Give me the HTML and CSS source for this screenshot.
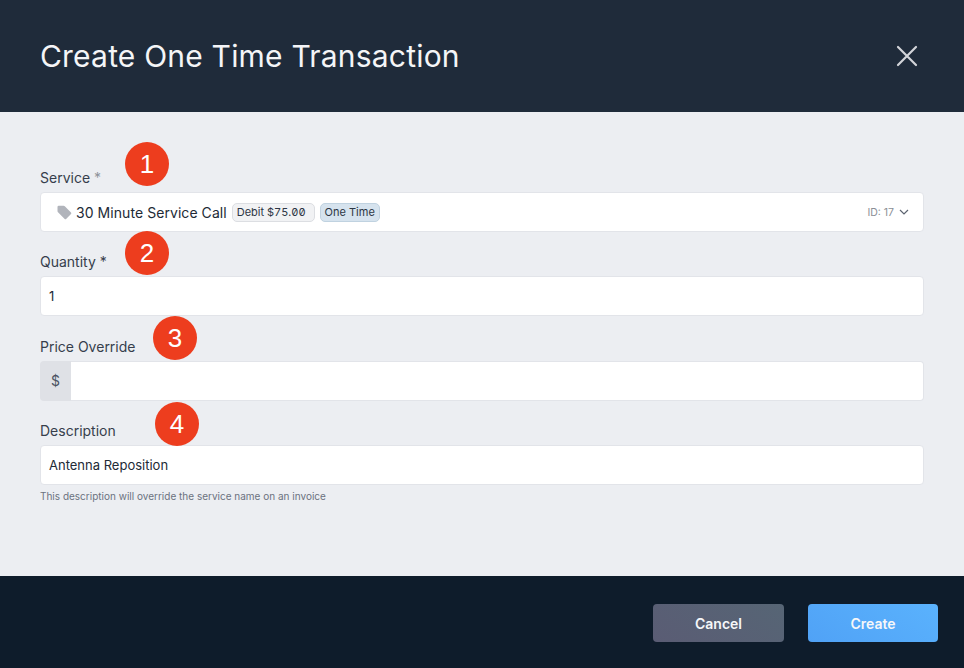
FILE: index.html
```html
<!DOCTYPE html>
<html lang="en">
<head>
  <meta charset="UTF-8">
  <meta name="viewport" content="width=device-width, initial-scale=1.0">
  <title>Create One Time Transaction</title>
  <link rel="stylesheet" href="styles.css">
</head>
<body>
  <div class="modal">
    <header class="modal-header">
      <h1>Create One Time Transaction</h1>
      <button class="close-btn" aria-label="Close">
        <svg width="24" height="24" viewBox="0 0 24 24" fill="none" stroke="currentColor" stroke-width="2.2" stroke-linecap="round">
          <path d="M3 3 L21 21 M21 3 L3 21"/>
        </svg>
      </button>
    </header>

    <main class="modal-body">
      <div class="form-group">
        <label>Service <span class="req req-muted">*</span></label>
        <div class="select-box">
          <svg class="tag-icon" width="15" height="15" viewBox="0 0 15 15">
            <path fill="#b1b4bb" d="M0.5 2 Q0.5 0.8 1.7 0.8 L6.6 0.8 Q7.3 0.8 7.8 1.3 L14 7.6 Q14.7 8.3 14 9 L9.1 13.9 Q8.4 14.6 7.7 13.9 L1 7.3 Q0.5 6.8 0.5 6.1 Z"/>
          </svg>
          <span class="select-name">30 Minute Service Call</span>
          <span class="badge badge-grey">Debit $75.00</span>
          <span class="badge badge-blue">One Time</span>
          <span class="select-id">ID: 17</span>
          <svg class="chevron" width="10" height="6" viewBox="0 0 10 6" fill="none" stroke="#5c6470" stroke-width="1.2">
            <path d="M1 1 L5 5 L9 1"/>
          </svg>
        </div>
      </div>

      <div class="form-group">
        <label>Quantity <span class="req">*</span></label>
        <div class="input">1</div>
      </div>

      <div class="form-group">
        <label>Price Override</label>
        <div class="input-group">
          <span class="addon">$</span>
          <div class="input"></div>
        </div>
      </div>

      <div class="form-group">
        <label>Description</label>
        <div class="input">Antenna Reposition</div>
        <p class="help">This description will override the service name on an invoice</p>
      </div>
    </main>

    <footer class="modal-footer">
      <button class="btn btn-cancel">Cancel</button>
      <button class="btn btn-create">Create</button>
    </footer>
  </div>

  <!-- numbered callouts drawn over the form -->
  <span class="marker marker-1">1</span>
  <span class="marker marker-2">2</span>
  <span class="marker marker-3">3</span>
  <span class="marker marker-4">4</span>
</body>
</html>
```

FILE: styles.css
```css
* {
  margin: 0;
  padding: 0;
  box-sizing: border-box;
}

body {
  font-family: Inter, "Liberation Sans", sans-serif;
  background: #eceef2;
  color: #2d3644;
  width: 964px;
  height: 668px;
  overflow: hidden;
  position: relative;
}

.modal {
  display: flex;
  flex-direction: column;
  height: 668px;
}

.modal-header {
  height: 112px;
  flex-shrink: 0;
  background: #1f2b3a;
  display: flex;
  align-items: center;
  justify-content: space-between;
  padding: 0 45px 0 40px;
}

.modal-header h1 {
  font-size: 30px;
  font-weight: 400;
  color: #f4f5f7;
  letter-spacing: 0.2px;
}

.close-btn {
  background: none;
  border: none;
  color: #d3d5d9;
  display: flex;
}

.modal-body {
  flex: 1;
  padding: 56px 40px 0;
}

.form-group {
  margin-bottom: 20.4px;
}

label {
  display: block;
  font-size: 14px;
  line-height: 20px;
  margin-bottom: 4px;
  color: #363e4c;
}

.req {
  color: #363e4c;
}

.req-muted {
  color: #8f939b;
}

.select-box,
.input {
  height: 40px;
  background: #fff;
  border: 1px solid #e2e4e9;
  border-radius: 4px;
  display: flex;
  align-items: center;
  font-size: 13px;
  color: #222a36;
}

.input {
  padding: 0 8px;
}

.select-box {
  padding: 0 14px 0 16px;
}

.tag-icon {
  margin-right: 4px;
  flex-shrink: 0;
}

.select-name {
  font-size: 14px;
  letter-spacing: 0.06px;
  margin-right: 5px;
}

.badge {
  font-size: 11px;
  line-height: 16px;
  padding: 0 4px;
  height: 19px;
  display: inline-flex;
  align-items: center;
  border-radius: 5px;
  margin-right: 5px;
  color: #2d3644;
}

.badge-grey {
  background: #f1f2f4;
  border: 1px solid #dcdee2;
  padding-right: 8px;
  font-feature-settings: "zero", "tnum";
}

.badge-blue {
  background: #d6e3ee;
  border: 1px solid #c0d2e0;
}

.select-id {
  margin-left: auto;
  font-size: 10.5px;
  color: #8b8f96;
  margin-right: 5px;
}

.input-group {
  display: flex;
}

.addon {
  width: 31px;
  height: 40px;
  background: #dfe1e6;
  border-radius: 4px 0 0 4px;
  display: flex;
  align-items: center;
  justify-content: center;
  font-size: 14px;
  color: #4a5362;
}

.input-group .input {
  flex: 1;
  border-radius: 0 4px 4px 0;
  border-left: none;
}

.help {
  font-size: 10px;
  line-height: 12px;
  margin-top: 5px;
  color: #6b7280;
}

.modal-footer {
  height: 92px;
  flex-shrink: 0;
  background: #0e1c2b;
  display: flex;
  align-items: center;
  justify-content: flex-end;
  gap: 24px;
  padding: 2px 26px 0 0;
}

.btn {
  height: 38px;
  border: none;
  border-radius: 4px;
  color: #f6f7f9;
  font-family: inherit;
  font-size: 14px;
  font-weight: 600;
}

.btn-cancel {
  width: 131px;
  background: linear-gradient(35deg, #5a5c74 0%, #566575 100%);
}

.btn-create {
  width: 130px;
  background: linear-gradient(35deg, #50a2f6 0%, #5ab2fd 100%);
}

.marker {
  position: absolute;
  width: 44px;
  height: 44px;
  border-radius: 50%;
  background: #ed3d1e;
  color: #fff;
  font-family: "Liberation Sans", sans-serif;
  font-size: 26px;
  display: flex;
  align-items: center;
  justify-content: center;
}

.marker-1 { left: 125px; top: 142px; }
.marker-2 { left: 125px; top: 231px; }
.marker-3 { left: 153px; top: 316px; }
.marker-4 { left: 155px; top: 402px; }
```
